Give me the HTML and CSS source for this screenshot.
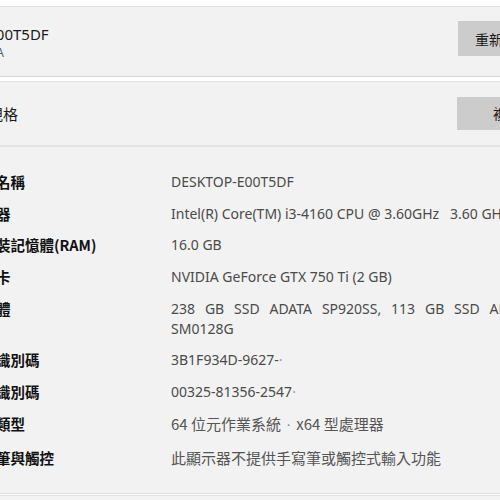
FILE: index.html
```html
<!DOCTYPE html>
<html lang="zh-Hant">
<head>
    <meta charset="UTF-8">
    <meta name="viewport" content="width=device-width, initial-scale=1.0">
    <title>關於</title>
    <link rel="stylesheet" href="styles.css">
</head>
<body>

<div class="page">

    <!-- Device name card -->
    <section class="card card-device">
        <div class="device-info">
            <div class="device-name">DESKTOP-E00T5DF</div>
            <div class="device-model">MS-7817 PRO A</div>
        </div>
        <button class="btn btn-rename">重新命名此電腦</button>
    </section>

    <!-- Device specifications expander -->
    <section class="expander">
        <div class="expander-head">
            <span class="expander-title">裝置規格</span>
            <button class="btn btn-copy">複製</button>
            <span class="chevron">
                <svg width="12" height="12" viewBox="0 0 12 12"><path d="M2 8 L6 4 L10 8" fill="none" stroke="#333" stroke-width="1.2"/></svg>
            </span>
        </div>
        <dl class="specs">
            <dt>裝置名稱</dt>
            <dd>DESKTOP-E00T5DF</dd>
            <dt>處理器</dt>
            <dd>Intel(R) Core(TM) i3-4160 CPU @ 3.60GHz&nbsp;&nbsp; 3.60 GHz</dd>
            <dt>已安裝記憶體(RAM)</dt>
            <dd>16.0 GB</dd>
            <dt>顯示卡</dt>
            <dd>NVIDIA GeForce GTX 750 Ti (2 GB)</dd>
            <dt>儲存體</dt>
            <dd class="justify">238 GB SSD ADATA SP920SS, 113 GB SSD APPLE SSD SM0128G</dd>
            <dt>裝置識別碼</dt>
            <dd>3B1F934D-9627-<span class="redact">·</span></dd>
            <dt>產品識別碼</dt>
            <dd>00325-81356-2547<span class="redact">·</span></dd>
            <dt>系統類型</dt>
            <dd class="cjk">64 位元作業系統<span class="sep">·</span>x64 型處理器</dd>
            <dt>手寫筆與觸控</dt>
            <dd class="cjk">此顯示器不提供手寫筆或觸控式輸入功能</dd>
        </dl>
    </section>

    <section class="card card-next"></section>

</div>

</body>
</html>
```

FILE: styles.css
```css
/* Page base */
body {
    margin: 0;
    background-color: #fff;
    overflow: hidden;
    font-family: "Noto Sans", "Noto Sans CJK TC", sans-serif;
    color: #1a1a1a;
}

.page {
    margin-left: -100px;
    width: 720px;
    padding-top: 6px;
}

/* Cards */
.card {
    background-color: #f2f2f2;
    border: 1px solid #e2e2e2;
}

.card-device {
    display: flex;
    align-items: center;
    justify-content: space-between;
    height: 69px;
    padding: 0 29px 0 16px;
    border-bottom-color: #d6d6d6;
    margin-bottom: 4px;
}

.device-name {
    font-size: 15px;
    line-height: 20px;
    margin-top: 2px;
}

.device-model {
    font-size: 12px;
    line-height: 16px;
    margin-top: 1px;
    color: #5a5a5a;
}

.btn {
    font-family: "Noto Sans CJK TC", sans-serif;
    font-size: 14px;
    color: #1a1a1a;
    background-color: #cccccc;
    border: none;
    border-radius: 0;
    cursor: pointer;
}

.btn-rename {
    height: 35px;
    padding: 0 17px;
    margin-top: -6px;
}

/* Expander */
.expander {
    background-color: #f2f2f2;
    border: 1px solid #e2e2e2;
    border-bottom-color: #dedede;
}

.expander-head {
    display: flex;
    align-items: center;
    height: 63px;
    padding: 0 20px 0 57px;
    border-bottom: 2px solid #e4e4e4;
}

.expander-title {
    font-family: "Noto Sans CJK TC", sans-serif;
    font-size: 15px;
    flex: 1;
}

.btn-copy {
    width: 100px;
    height: 33px;
    margin-top: -1px;
}

.chevron {
    display: flex;
    margin-left: 30px;
}

.specs {
    display: grid;
    grid-template-columns: 204px 395px;
    row-gap: 11.7px;
    margin: 0;
    padding: 25px 0 25px 66px;
}

.specs dt {
    font-family: "Noto Sans CJK TC", sans-serif;
    font-weight: 700;
    font-size: 14.5px;
    line-height: 20px;
    color: #111;
}

.specs dd {
    margin: 0;
    font-size: 14px;
    line-height: 20px;
    color: #4a4a4a;
}

.specs dd.justify {
    text-align: justify;
}

.specs dd.cjk {
    font-family: "Noto Sans CJK TC", sans-serif;
    font-size: 15px;
    color: #555;
}

.sep {
    font-family: "Noto Sans", sans-serif;
    font-size: 12px;
    margin: 0 6px;
    color: #777;
}

.redact {
    color: #9a9a9a;
}

.card-next {
    height: 20px;
    margin-top: 1px;
    background-color: #f3f3f3;
}
```
